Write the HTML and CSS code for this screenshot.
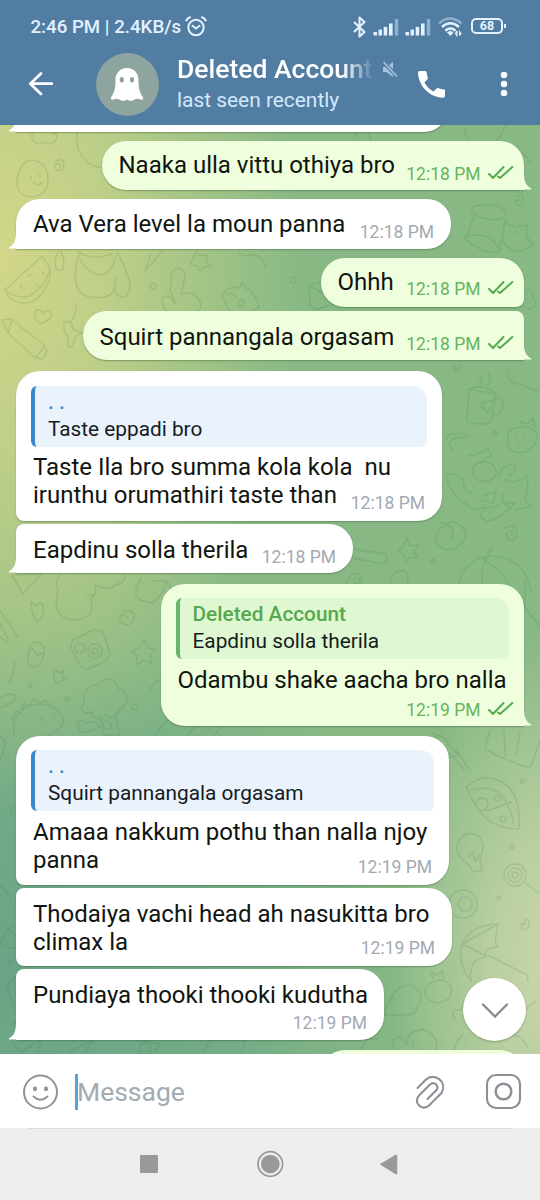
FILE: index.html
```html
<!DOCTYPE html>
<html lang="en">
<head>
<meta charset="utf-8">
<title>Chat</title>
<link rel="stylesheet" href="styles.css">
</head>
<body>
<svg class="defs" width="0" height="0">
  <defs>
    <symbol id="ticks" viewBox="0 0 26 14"><path d="M1 8l4 4L15.5 1M10 10.5l2 1.500L24.300 1" fill="none" stroke="#55ab4f" stroke-width="2" stroke-linecap="round" stroke-linejoin="round"/></symbol>
    <symbol id="tail" viewBox="0 0 10 18"><path d="M0 0h2c0 9 1.500 13.500 7 16.300q1 1.200-1 1.200H0z" fill="currentColor"/></symbol>
    <symbol id="signal" viewBox="0 0 26 18"><path d="M.5 17.500v-3.500h3.500v3.500zM5.500 17.500v-6H9v6zM10.700 17.500V9h3.500v8.500zM16 17.500V5.500h3.600v12z" fill="#e3f1ff"/><path d="M21.800 17.500V1h3.500v16.500z" fill="#8fb0cf"/></symbol>
  </defs>
</svg>
<div class="screen">
  <header class="header">
    <div class="status">
      <span class="clock">2:46 PM | 2.4KB/s</span>
      <svg class="alarm" width="22" height="22" viewBox="0 0 22 22" fill="none" stroke="#e3f1ff" stroke-width="2" stroke-linecap="round" stroke-linejoin="round"><circle cx="11" cy="11.500" r="7.700"/><path d="M7.500 9.800l3.300 2.700 3.800-2.700M1.300 4.500Q2.500 2 5 1.300M20.700 4.500Q19.500 2 17 1.300"/></svg>
      <span class="spring"></span>
      <svg class="bt" width="15" height="22" viewBox="0 0 15 22" fill="none" stroke="#e3f1ff" stroke-width="2.100" stroke-linejoin="round"><path d="M2 6l10.500 10-5 4.500v-19l5 4.500L2 16"/></svg>
      <svg class="sig" width="26" height="18"><use href="#signal"/></svg>
      <svg class="sig" width="26" height="18"><use href="#signal"/></svg>
      <svg class="wifi" width="25" height="20" viewBox="0 0 25 20" fill="none" stroke-width="2.500"><path d="M1 6.500q11-10 22.500 0" stroke="#8fb0cf"/><path d="M4 10q8.300-7.500 17 0M7.300 13.700q5-4.300 10.300 0" stroke="#e3f1ff"/><path d="M9.500 15.500q2.800-2 5.500 0l-2.700 3zM17 17l2-3v5.500M21.500 13.500v5l2-2" fill="#e3f1ff" stroke="#e3f1ff" stroke-width="1"/></svg>
      <span class="battery">68</span>
    </div>
    <div class="bar">
      <svg class="back" width="26" height="26" viewBox="0 0 26 26" fill="none" stroke="#fff" stroke-width="2.700" stroke-linecap="round" stroke-linejoin="round"><path d="M14 2.500L3.300 12.700 14 23M3.500 12.700H25"/></svg>
      <div class="avatar"><svg width="36" height="36" viewBox="0 0 36 36"><path d="M18 2C11 2 6.500 7 6.500 14c0 9-1.500 13-4.400 17.300-.9 1.700.4 3 2.300 2.200 2.200-.9 3.800-1.400 5.900.1 2.500 1.800 4.500 2 7.700 0 3.200 2 5.200 1.800 7.700 0 2.100-1.500 3.700-1 5.900-.1 1.900.8 3.200-.5 2.300-2.200C31 27 29.500 23 29.500 14 29.500 7 25 2 18 2z" fill="#fff"/><ellipse cx="12.800" cy="13.700" rx="2.100" ry="2.800" fill="#8ea49f"/><ellipse cx="23" cy="13.700" rx="2.100" ry="2.800" fill="#8ea49f"/></svg></div>
      <div class="who">
        <div class="title"><span class="name">Deleted Account</span><svg width="17" height="17" viewBox="0 0 17 17"><path d="M1 6h3.500L11 1v15l-6.500-5H1z" fill="#a5c3df"/><path d="M0 0l16 16" stroke="#527da3" stroke-width="4"/><path d="M1.500 1L15 15.500" stroke="#a5c3df" stroke-width="1.700"/></svg></div>
        <div class="seen">last seen recently</div>
      </div>
      <svg class="phone" width="29" height="29" viewBox="0 0 29 29"><path d="M3 1h4.800c1 0 1.600.5 1.800 1.500.2 1.800.6 3.500 1.100 5 .3.900.1 1.500-.5 2.100l-2.800 2.900c2.200 4 5 6.900 9.100 9.100l2.900-2.900c.6-.6 1.200-.8 2-.5 1.700.6 3.400.9 5.100 1.100 1 .1 1.500.7 1.500 1.700v4.500c0 1.600-.8 2.300-2.300 2.200C12.500 27 2 16.500 1 3.200 1 1.800 1.600 1 3 1z" fill="#fff"/></svg>
      <svg class="more" width="8" height="26" viewBox="0 0 8 26" fill="#fff"><circle cx="4" cy="4" r="3.200"/><circle cx="4" cy="13" r="3.200"/><circle cx="4" cy="22" r="3.200"/></svg>
    </div>
  </header>

  <main class="chat">
    <svg class="doodles" width="540" height="929" viewBox="0 125 540 929">
      <path d="M33 140q-4-8 5-9 8-5 14 1 8 3 3 9-5 5-11 1-6 5-11-2zM77 132q-2 22 12 31 9 6 20 4M32 160c-10 0-15 14-15 23 0 10 7 14 16 14 10-1 15-8 15-17 0-11-6-20-16-20zM31 176v3M40 174v3M34 183q4 4 8-1M55 162q7-5 9 1 0 9-7 7-5-3 0-6 4-1 3 3"/>
      <path d="M5 290q19 13 30 2 12-9 15-24l-8-12zM5 290q5 12 17 13 13 1 21-11 9-13 7-24M28 276l3-2M20 285l2 3M36 284l3 2M32 293l-2 3M42 272l2 2M58 252l-3 8 1 10h7l1-10-3-8M78 252q14 9 34 2M80 252c-7 19-7 40 6 44 15 4 26 1 28-7M80 260q9 14 20 15 12-1 16-20M117 252q10 18 13 32 0 13-8 13-11-2-6-20M163 251l-18 20 6-17M193 258l3-6 5 4 6-2-1 7 5 5-7 1-4 5-3-6-6-1zM239 253q8 5 15 1 10 3 12 15M170 290q2-8 1-15 3-8 10-6 6 4 3 13l-3 12q12-3 17 4 7 11-3 14-12 3-24 2-7-4-8-9-3-9 5-9 5 3 8 8z"/>
      <path d="M2 320l9-1 33 26q6 9-2 14l-7-1L8 333zM8 333l4-14M36 357l8-10M40 324q-9-8-4-13 4-3 7 2 5-5 8 0 3 6-11 11zM76 306q0 11-6 16M64 322q8-2 9 7l10 4q-8 0-10 11-2 5-5 2 2-8-4-15zM222 295q8-10 18-7l2-6 4 6q10 5 13 19l-9 5q-11 5-22-3zM228 294q6-2 8 3M241 300a3 3 0 1 0 .1 0M153 283a3 3 0 1 0 .1 0"/>
      <path d="M464 126q1 18 15 21 19 0 26-21M354 137q6-11 14-4l5 11M500 165q9-7 14-8v-9q9 3 16 14M516 197q8-5 7 3-1 7-7 4-3-5 3-4M474 213q-6-6 3-7 22-5 29 7-1 9-19 6-12-2-13-6zM474 214q-6 21-9 25 22 18 34 12l7-32M466 236q17-3 26 3l9 12M505 222l9 5 13-2-1 11 8 9-14 6q-14 1-18-13zM516 231l2 3M526 234l1 3M309 285l26-6 6 22-25 9-6-5zM309 285l17 10 9-16M293 277a3 3 0 1 0 .1 0M526 290q8-2 7 9 7 5-2 10l-14-4"/>
      <path d="M469 389l27 5-5 28q-12 5-24-1zM469 389q14-6 27 5M496 398q8-1 7 8-1 8-10 8M481 403l13-3-6 13zM480 407l8 4M478 387q6-5 1-11M487 386q6-8 1-13M509 430q-4 15 4 21 8 4 17-2 10-9 6-17-9-9-27-2zM525 428l-5-7 8 3 5-6 2 9M517 437v2M524 435v2M531 439v2M518 445v2M526 446v2M495 431a2 2 0 1 0 .1 0M507 370q2 15 13 14l18 8M446 439q2-7 12-5 11-2 9 3l-12 1q-10 5-2 12M485 462c-9 0-14 5-12 12 4 11 21 9 23 0 1-7-4-12-11-12zM468 456l10-2 10-5 3 6-10 7M448 474q8-2 15 6 0 11 10 14M498 478q3-14 16-13 4 7-6 11M505 480l8 2 8-2 5-4 2 8-3 16 6 6-16 4q-14-4-12-16M446 475q3 18 20 29 8 9 18 3 8 3 18-4l13 0-10 9q-7 8-18 9l-7-4 4-9M483 496l13-4-3 11-14-3"/>
      <path d="M446 525q8-6 13 0 8 4 6 13-5 11-18 12-12-3-11-13 2-10 10-12zM440 523q9-1 12 6 3 7-2 12M505 528q11-6 12 4-2 13-10 6-2-7 5-7 3 3-1 4M403 547l4-9 3 8 8-1-4 7 4 6-8-1-5 5-1-8-6-3zM353 549l32 5q5 6-2 10l-34-7M433 559a2 2 0 1 0 .1 0M459 584c3-17 16-29 36-28 19 2 32 12 36 36M492 548q-12 17-10 36M482 558q26 17 31 36M525 580v28l15 18M390 583q5-16 15-12 5 4 2 12M347 583q4-12 12-9 7 7-1 10-7-1-3-6 5-2 4 3M456 372l-3-5 7 2 1-4"/>
      <path d="M12 575l29-1-18 20zM60 575q-6 8-2 16-6 22 8 27 13 5 24-4 4-9 0-15 8-4 5-14 14 6 20 0 12-2 10-14M87 595q5 2 8-2M36 606q-7-6-5-2 1 12 6 18 8-5 6-17-2-4-7 1zM123 612q7-4 11 2 1 8-6 11-9 0-8-9 6-3 7 2M141 579q-10 16-1 21l13 3q10-9 14-20M153 581q18-2 17 7M0 611l18 26M0 637l7 5M0 624l8 15"/>
      <path d="M73 640l20-10q10-1 12 7l5 16q1 5-9 10l-13 6q-6 1-9-6l-8-15q0-5 2-8zM80 643a5 5 0 1 0 .1 0M95 644a7 7 0 1 0 .1 0M95 648a3 3 0 1 0 .1 0M144 640l4 8 8 1-6 6 2 9-8-4-8 5 1-9-6-5 8-2zM29 650q1-8 9-8 7 2 6 10-2 16-10 15-9-1-5-17zM28 653l5-4 4 6 8-3M54 677v-8l5 4 5-3-2 6 3 4-5 1-4 3zM9 683q9-20 4-22M30 684a2 2 0 1 0 .1 0M67 697a2 2 0 1 0 .1 0M135 704a3 3 0 1 0 .1 0M84 702c-2-10 7-19 14-17 6-10 19-6 20 4 12 2 11 16 1 21-2 10-10 8-13 5-6 6-15 4-14-3-10 3-13-4-8-10zM100 715l4 20h15q-1-12-4-21M107 721a4 4 0 1 0 .1 0M100 727l-12 5-8 0q-5-8 1-11 4-1 6 2 9-3 13 4M0 697q13-6 16 0-4 7-16 11M14 735c-3-19 10-32 28-31 19 3 25 15 19 23-7 8-15 7-15 13M12 720l4-9 5 2 2-9 7 1 4-6 6 4 6-3 4 6M41 718l3 3M52 713l3 2M0 737q10 2 0 23M150 690q5-12 14-10M156 735q11-21 26-18M188 735l17-20 8 5M215 735l8-12M12 813q-4-7 4-7"/>
      <path d="M490 730l-5 19q20 12 45 19l10-27M504 730l1 26M520 733l-4 22M433 733l17 25 8-3-14-17-11-5M450 753l14 17M456 750l13 19M466 787q17-15 36-5 19 10 17 47-20 0-32-10-13-12-21-32zM470 790q20-5 31 4 10 13 13 31M482 798a6 6 0 1 0 .1 0M497 795a3 3 0 1 0 .1 0M487 811l24-9M503 816a3 3 0 1 0 .1 0M522 779a2 2 0 1 0 .1 0M512 845a2 2 0 1 0 .1 0M457 850c-1-18 20-21 25-9 3 8-1 11-2 20l2 9-10 2c0-9-14-12-15-22zM468 857l5-5 2 9 5-6M515 864a11 11 0 1 0 .1 0M515 868a7 7 0 1 0 .1 0M515 872a3 3 0 1 0 .1 0M524 882l16 12M463 890a14 14 0 1 0 .1 0M465 897a7 7 0 1 0 .1 0M499 896a2 2 0 1 0 .1 0M522 925q6-10 7-2 0 8-7 6-2-7 4-5"/>
      <path d="M462 944q10-20 36-20-5 23 0 23-13 0-14 11-8 0-11 6-4 8-2 17-14-18-9-37zM462 944l36-20M462 944l24 12M488 955l35 18q7 2 4 8M384 1015q9-32 28-30 15 10 5 22 0 8-13 8zM391 996l3 3M436 981q8-3 15 5 3 15-14 17-15-4-11-15 3-6 10-7zM433 979l-2-7 6 3 5-4 1 8M394 1049q-5-9 5-12 5 2 8 8 0-13 10-14 10-5 18 8 5 8-4 15l-11-3M413 1040v13M455 1020q-6-12 6-10 4-14 12-14M463 1034q-8 8-8 16M507 1035q13-3 21 13M522 1018q4-13 14-16M360 1052q6-18 18-12"/>
      <path d="M0 885l11 12M13 926q-6 2-7 6l-5 11q8 6 15 5M14 933l-9-6M10 960a2 2 0 1 0 .1 0M16 976q-15 9-3 26M10 1040l11 12 20-12-3 13M68 1052l26-12-10 12M134 1040l26 4-5 8M145 1043a6 6 0 1 0 .1 0M204 1052l6-12h35l-3 12M12 1025q4-7 5 2"/>
    </svg>
    <div class="list">
      <div class="msg in b0"><svg class="tail"><use href="#tail"/></svg></div>
      <div class="msg out b1"><p>Naaka ulla vittu othiya bro</p><span class="meta">12:18 PM<svg><use href="#ticks"/></svg></span><svg class="tail"><use href="#tail"/></svg></div>
      <div class="msg in b2"><p>Ava Vera level la moun panna</p><span class="meta">12:18 PM</span><svg class="tail"><use href="#tail"/></svg></div>
      <div class="msg out grouped b3"><p>Ohhh</p><span class="meta">12:18 PM<svg><use href="#ticks"/></svg></span></div>
      <div class="msg out b4"><p>Squirt pannangala orgasam</p><span class="meta">12:18 PM<svg><use href="#ticks"/></svg></span><svg class="tail"><use href="#tail"/></svg></div>
      <div class="msg in grouped b5"><div class="reply"><b>. .</b><span>Taste eppadi bro</span></div><p>Taste Ila bro summa kola kola&nbsp; nu<br>irunthu orumathiri taste than</p><span class="meta">12:18 PM</span></div>
      <div class="msg in b6"><p>Eapdinu solla therila</p><span class="meta">12:18 PM</span><svg class="tail"><use href="#tail"/></svg></div>
      <div class="msg out b7"><div class="reply"><b>Deleted Account</b><span>Eapdinu solla therila</span></div><p>Odambu shake aacha bro nalla</p><span class="meta">12:19 PM<svg><use href="#ticks"/></svg></span><svg class="tail"><use href="#tail"/></svg></div>
      <div class="msg in grouped b8"><div class="reply"><b>. .</b><span>Squirt pannangala orgasam</span></div><p>Amaaa nakkum pothu than nalla njoy<br>panna</p><span class="meta">12:19 PM</span></div>
      <div class="msg in grouped b9"><p>Thodaiya vachi head ah nasukitta bro<br>climax la</p><span class="meta">12:19 PM</span></div>
      <div class="msg in b10"><p>Pundiaya thooki thooki kudutha</p><span class="meta">12:19 PM</span><svg class="tail"><use href="#tail"/></svg></div>
      <div class="msg out b11"></div>
    </div>
    <div class="down"><svg width="28" height="18" viewBox="0 0 28 18" fill="none" stroke="#858b92" stroke-width="2.300" stroke-linecap="round"><path d="M2 2.500l12 12 12-12"/></svg></div>
  </main>

  <div class="composer">
    <svg width="38" height="38" viewBox="0 0 38 38" fill="none" stroke="#8f9499" stroke-width="2" stroke-linecap="round"><circle cx="19.500" cy="19" r="16.500"/><path d="M12.500 23.500q7 6.500 14 0"/><ellipse cx="14" cy="15.700" rx="1.100" ry="1.500" fill="#8f9499"/><ellipse cx="25" cy="15.700" rx="1.100" ry="1.500" fill="#8f9499"/></svg>
    <div class="field">Message</div>
    <svg class="clip" width="34" height="38" viewBox="0 0 34 38" fill="none" stroke="#8a9096" stroke-width="2.100" stroke-linecap="round" stroke-linejoin="round"><path d="M3.500 15L12 6.500C20-1 34 8.500 27.500 20L15 32.500C8 39-2 29 5.500 22L16 11.500c5-4 10 2.500 6 6L13.500 26"/></svg>
    <svg width="38" height="38" viewBox="0 0 38 38" fill="none" stroke="#8a9096" stroke-width="2.100"><rect x="2" y="2" width="33" height="33" rx="9"/><circle cx="18.500" cy="18.500" r="7.800" stroke-width="2.500"/></svg>
  </div>
  <nav class="nav">
    <svg width="540" height="72" viewBox="0 0 540 72"><path d="M28 .5h484" stroke="#dcdcdc"/><rect x="140" y="27" width="18" height="18" rx="1" fill="#999"/><circle cx="270.300" cy="36" r="12.300" fill="none" stroke="#999" stroke-width="1.700"/><circle cx="270.300" cy="36" r="9.300" fill="#999"/><path d="M380.500 36.300L396 27q.8-.4.800.5v18q0 1-.8.500z" fill="#999" stroke="#999"/></svg>
  </nav>
</div>
</body>
</html>
```
FILE: styles.css
```css
* { box-sizing: border-box; }
body { margin: 0; font-family: Roboto, sans-serif; background: #fff; }
.defs { position: absolute; }
.screen { width: 540px; height: 1200px; display: flex; flex-direction: column; overflow: hidden; }
svg { display: block; flex: none; }

.header { height: 125px; flex: none; background: #527da3; color: #fff; position: relative; z-index: 1; }
.status { height: 53px; display: flex; align-items: center; padding: 0 37px 0 30.500px; color: #e3f1ff; }
.clock { font-size: 18.700px; font-weight: 500; width: 154.500px; white-space: nowrap; }
.spring { flex: 1; }
.bt { margin-right: 6px; }
.sig { margin-right: 6px; }
.wifi { margin: 0 8px 0 1px; }
.battery { width: 32px; height: 16px; border: 2px solid #e3f1ff; border-radius: 5px; font-size: 12.500px; line-height: 12px; font-weight: 700; text-align: center; position: relative; margin-top: -2px; }
.battery::after { content: ""; position: absolute; right: -5px; top: 4px; width: 2px; height: 4px; background: #e3f1ff; }
.bar { height: 62px; display: flex; align-items: center; padding-left: 27px; }
.avatar { width: 63px; height: 63px; border-radius: 50%; background: #8ea49f; margin-left: 43px; display: grid; place-items: center; padding-right: 1px; }
.who { width: 240px; margin-left: 18px; }
.title { display: flex; align-items: center; gap: 8px; height: 30px; margin-top: 1px; }
.name { width: 197px; overflow: hidden; white-space: nowrap; font-size: 26.500px; line-height: 32px; font-weight: 500; -webkit-mask-image: linear-gradient(90deg, #000 84%, transparent); mask-image: linear-gradient(90deg, #000 84%, transparent); }
.seen { font-size: 20.900px; line-height: 32px; height: 31px; color: #d2e8fb; white-space: nowrap; }
.more { margin-left: 53.500px; }

.chat { position: relative; height: 929px; flex: none; overflow: hidden; background:
  radial-gradient(ellipse 300px 560px at 0 130px, #d2d689 0%, #c8d388d9 35%, #b0c98500 100%),
  radial-gradient(ellipse 170px 330px at 560px 840px, #cdd8ac 0%, #c5d4a8cc 40%, #a8cb9a00 100%),
  radial-gradient(ellipse 420px 380px at 0 850px, #69a486 0%, #6ea887cc 55%, #80b48500 100%),
  #88b985; }
.doodles { position: absolute; inset: 0; fill: none; stroke: #3e7643; stroke-opacity: .16; stroke-width: 1.5; stroke-linejoin: round; stroke-linecap: round; }
.list { position: relative; display: flex; flex-direction: column; padding: 0 16.500px 0 16px; }
.msg { position: relative; display: grid; align-content: start; flex: none; border-radius: 24px; padding: 10.500px 17px 0; box-shadow: 0 1px 1.500px #37603c77; }
.in { align-self: flex-start; background: #fff; color: #fff; }
.out { align-self: flex-end; background: #efffde; color: #efffde; }
.msg p { margin: 0; color: #101510; font-size: 24px; line-height: 28.300px; white-space: nowrap; }
.meta { position: absolute; right: 17px; bottom: 5.500px; display: flex; align-items: center; gap: 7px; font-size: 17.500px; line-height: 22px; color: #a1aab3; white-space: nowrap; }
.grouped .meta { bottom: 7px; }
.out .meta { right: 10px; color: #68b35f; }
.meta svg { width: 26px; height: 14px; margin-top: -2px; }
.tail { position: absolute; bottom: 0; width: 10px; height: 18px; }
.out .tail { left: calc(100% - 1.500px); }
.in .tail { right: calc(100% - 1.500px); transform: scaleX(-1); }
.reply { height: 61px; margin: 4px -2px 6.500px; padding: 3px 0 0 13px; border-left: 4px solid #3b87cb; border-radius: 6px 14px 6px 6px; background: #eaf3fb; font-size: 20.800px; line-height: 27px; color: #161b1f; }
.reply b, .reply span { display: block; white-space: nowrap; height: 27px; font-weight: 400; }
.reply b { font-weight: 500; color: #3b87cb; }
.out .reply { background: #e0f8d2; border-color: #68b568; }
.out .reply b { color: #55a84f; }

.b0 { width: 432px; height: 50px; margin-top: -43.500px; border-bottom-left-radius: 0; }
.b1 { width: 422px; height: 49.500px; margin-top: 9px; border-bottom-right-radius: 0; }
.b2 { width: 435px; height: 49.500px; margin-top: 9px; border-bottom-left-radius: 0; }
.b3 { width: 203px; height: 49.500px; margin-top: 9px; border-bottom-right-radius: 8px; }
.b4 { width: 441px; height: 49.500px; margin-top: 3.500px; padding-top: 12px; border-top-right-radius: 8px; border-bottom-right-radius: 0; }
.b5 { width: 426px; height: 149.500px; margin-top: 11px; border-bottom-left-radius: 8px; }
.b5 .reply, .b8 .reply { width: 396px; }
.b6 { width: 337px; height: 49.500px; margin-top: 3px; padding-top: 12px; border-top-left-radius: 8px; border-bottom-left-radius: 0; }
.b7 { width: 363px; height: 142.500px; margin-top: 10.500px; border-bottom-right-radius: 0; }
.b7 .reply { width: 333px; }
.b8 { width: 433px; height: 149.500px; margin-top: 9.500px; border-bottom-left-radius: 8px; }
.b8 .reply { width: 403px; }
.b9 { width: 436px; height: 78px; margin-top: 3px; padding-top: 12px; border-top-left-radius: 8px; border-bottom-left-radius: 8px; }
.b10 { width: 368px; height: 70.500px; margin-top: 3px; padding-top: 12px; border-top-left-radius: 8px; border-bottom-left-radius: 0; }
.b11 { width: 203px; height: 50px; margin-top: 10.500px; }
.down { position: absolute; right: 14px; bottom: 13px; width: 63px; height: 63px; border-radius: 50%; background: #fff; display: grid; place-items: center; padding-top: 3px; box-shadow: 0 1px 2px #4569477a; }

.composer { height: 74px; flex: none; background: #fff; display: flex; align-items: center; padding: 2px 17px 0 21px; }
.field { flex: 1; margin-left: 16px; height: 36px; border-left: 3px solid #58a1d8; font-size: 26.500px; line-height: 35px; color: #a3abb3; text-indent: -1px; }
.clip { margin-right: 37px; }
.nav { height: 72px; flex: none; background: #eee; }
```
